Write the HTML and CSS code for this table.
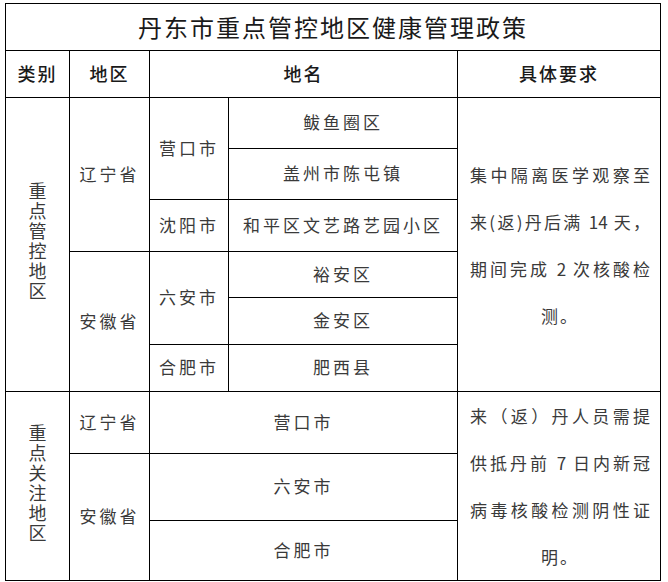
FILE: index.html
```html
<!DOCTYPE html>
<html lang="zh-CN">
<head>
<meta charset="utf-8">
<title>丹东市重点管控地区健康管理政策</title>
<link rel="stylesheet" href="styles.css">
</head>
<body>
<div class="sheet">
<table class="policy">
  <colgroup>
    <col class="c-type">
    <col class="c-prov">
    <col class="c-city">
    <col class="c-place">
    <col class="c-req">
  </colgroup>
  <tr class="r-title"><td colspan="5" class="title">丹东市重点管控地区健康管理政策</td></tr>
  <tr class="r-head">
    <td class="head">类别</td>
    <td class="head">地区</td>
    <td class="head" colspan="2">地名</td>
    <td class="head">具体要求</td>
  </tr>
  <tr class="r-a1">
    <td rowspan="6" class="vert-cell"><span class="vert">重点管控地区</span></td>
    <td rowspan="3" class="cell">辽宁省</td>
    <td rowspan="2" class="cell">营口市</td>
    <td class="cell">鲅鱼圈区</td>
    <td rowspan="6" class="req">
      <div class="para">
        <span class="line">集中隔离医学观察至</span>
        <span class="line">来(返)丹后满 14 天，</span>
        <span class="line">期间完成 2 次核酸检</span>
        <span class="line last">测。</span>
      </div>
    </td>
  </tr>
  <tr class="r-a2"><td class="cell">盖州市陈屯镇</td></tr>
  <tr class="r-a3"><td class="cell">沈阳市</td><td class="cell tight">和平区文艺路艺园小区</td></tr>
  <tr class="r-a4">
    <td rowspan="3" class="cell">安徽省</td>
    <td rowspan="2" class="cell">六安市</td>
    <td class="cell">裕安区</td>
  </tr>
  <tr class="r-a5"><td class="cell">金安区</td></tr>
  <tr class="r-a6"><td class="cell">合肥市</td><td class="cell">肥西县</td></tr>
  <tr class="r-b1">
    <td rowspan="3" class="vert-cell"><span class="vert">重点关注地区</span></td>
    <td class="cell">辽宁省</td>
    <td colspan="2" class="cell">营口市</td>
    <td rowspan="3" class="req">
      <div class="para">
        <span class="line">来（返）丹人员需提</span>
        <span class="line">供抵丹前 7 日内新冠</span>
        <span class="line">病毒核酸检测阴性证</span>
        <span class="line last">明。</span>
      </div>
    </td>
  </tr>
  <tr class="r-b2">
    <td rowspan="2" class="cell">安徽省</td>
    <td colspan="2" class="cell">六安市</td>
  </tr>
  <tr class="r-b3"><td colspan="2" class="cell">合肥市</td></tr>
</table>
</div>
</body>
</html>
```

FILE: styles.css
```css
html, body {
  margin: 0;
  padding: 0;
  background: #ffffff;
}

body {
  font-family: "Noto Sans CJK SC", "Noto Sans", sans-serif;
  color: #333333;
}

.sheet {
  padding: 3px 0 0 5px;
}

.policy {
  border-collapse: collapse;
  table-layout: fixed;
  width: 655px;
}

.c-type { width: 64px; }
.c-prov { width: 80px; }
.c-city { width: 79px; }
.c-place { width: 229px; }
.c-req { width: 203px; }

.policy td {
  border: 1px solid #000000;
  padding: 0;
  text-align: center;
  vertical-align: middle;
}

.r-title { height: 47px; }
.r-head { height: 47px; }
.r-a1 { height: 51px; }
.r-a2 { height: 51px; }
.r-a3 { height: 52px; }
.r-a4 { height: 46px; }
.r-a5 { height: 47px; }
.r-a6 { height: 47px; }
.r-b1 { height: 62px; }
.r-b2 { height: 65px; }
.r-b3 { height: 60px; }

.title {
  font-size: 24px;
  letter-spacing: 2px;
  color: #1a1a1a;
  padding-left: 2px;
}

.policy td.title {
  padding-bottom: 2px;
}

.head {
  font-size: 18px;
  letter-spacing: 2px;
  color: #1a1a1a;
  font-weight: 500;
}

.cell {
  font-size: 17px;
  letter-spacing: 3px;
  color: #3a3a3a;
}

.policy td.cell,
.policy td.head {
  padding-bottom: 3px;
}

.cell.tight {
  white-space: nowrap;
}

.vert-cell {
  color: #3a3a3a;
}

.vert {
  display: inline-block;
  writing-mode: vertical-rl;
  text-orientation: upright;
  font-size: 18px;
  letter-spacing: 2px;
  line-height: 1;
}

.req {
  color: #3a3a3a;
}

.para {
  display: flex;
  flex-direction: column;
  width: 180px;
  margin: 0 auto;
  padding-left: 2px;
}

.line {
  display: block;
  font-size: 17px;
  line-height: 47px;
  text-align: justify;
  text-align-last: justify;
  white-space: nowrap;
}

.line.last {
  text-align: center;
  text-align-last: center;
  letter-spacing: 2px;
}
```
